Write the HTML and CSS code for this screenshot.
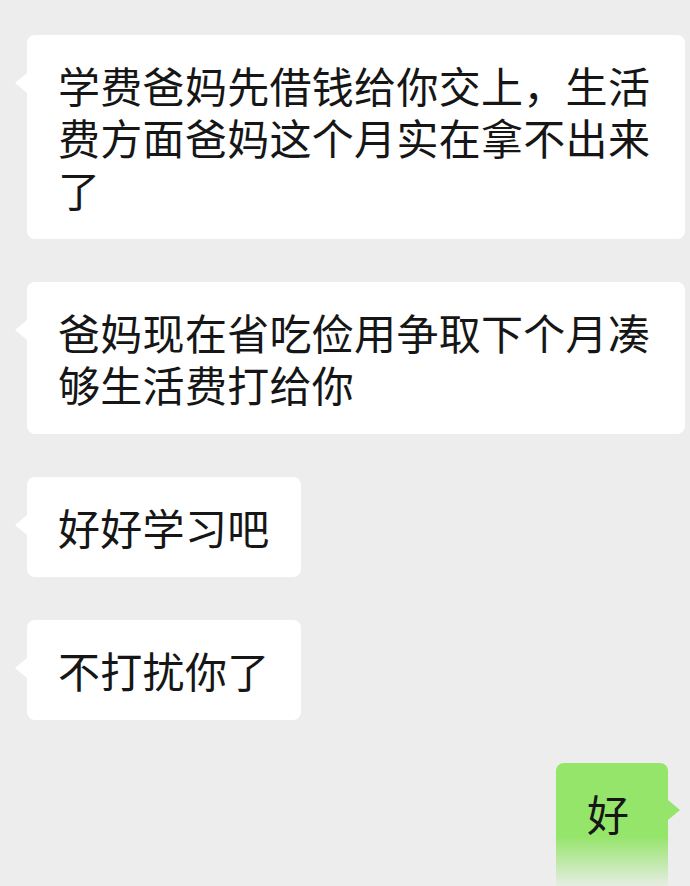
FILE: index.html
```html
<!DOCTYPE html>
<html lang="zh-CN">
<head>
    <meta charset="UTF-8">
    <meta name="viewport" content="width=device-width, initial-scale=1.0">
    <title>聊天记录</title>
    <link rel="stylesheet" href="styles.css">
</head>
<body>

    <div class="chat">
        <div class="msg left">
            <div class="bubble">学费爸妈先借钱给你交上，生活费方面爸妈这个月实在拿不出来了</div>
        </div>
        <div class="msg left">
            <div class="bubble">爸妈现在省吃俭用争取下个月凑够生活费打给你</div>
        </div>
        <div class="msg left">
            <div class="bubble">好好学习吧</div>
        </div>
        <div class="msg left">
            <div class="bubble">不打扰你了</div>
        </div>
        <div class="msg right">
            <div class="bubble mine">好</div>
        </div>
    </div>

    <div class="fade"></div>

</body>
</html>
```

FILE: styles.css
```css
body {
    margin: 0;
    padding: 0;
    background-color: #ededed;
    font-family: "Noto Sans CJK SC", "Noto Sans", sans-serif;
    color: #161616;
    overflow: hidden;
}

.chat {
    padding-top: 35px;
    display: flex;
    flex-direction: column;
    gap: 43px;
}

.msg {
    display: flex;
}

.msg.left {
    justify-content: flex-start;
    padding: 0 5px 0 27px;
}

.msg.right {
    justify-content: flex-end;
    padding: 0 22px 0 27px;
}

.bubble {
    position: relative;
    background-color: #ffffff;
    border-radius: 8px;
    padding: 24px 31px;
    font-size: 42px;
    line-height: 52px;
    letter-spacing: 0.3px;
}

.msg.left .bubble::before {
    content: "";
    position: absolute;
    left: -12px;
    top: 38px;
    border-top: 10px solid transparent;
    border-bottom: 10px solid transparent;
    border-right: 12px solid #ffffff;
}

.bubble.mine {
    background-color: #95e56a;
    min-width: 112px;
    box-sizing: border-box;
    padding-bottom: 60px;
}

.msg.right .bubble::after {
    content: "";
    position: absolute;
    right: -12px;
    top: 37px;
    border-top: 10px solid transparent;
    border-bottom: 10px solid transparent;
    border-left: 12px solid #95e56a;
}

.fade {
    position: fixed;
    left: 0;
    right: 0;
    bottom: 0;
    height: 50px;
    background: linear-gradient(to bottom, rgba(237, 237, 237, 0), rgba(237, 237, 237, 0.92));
}
```
